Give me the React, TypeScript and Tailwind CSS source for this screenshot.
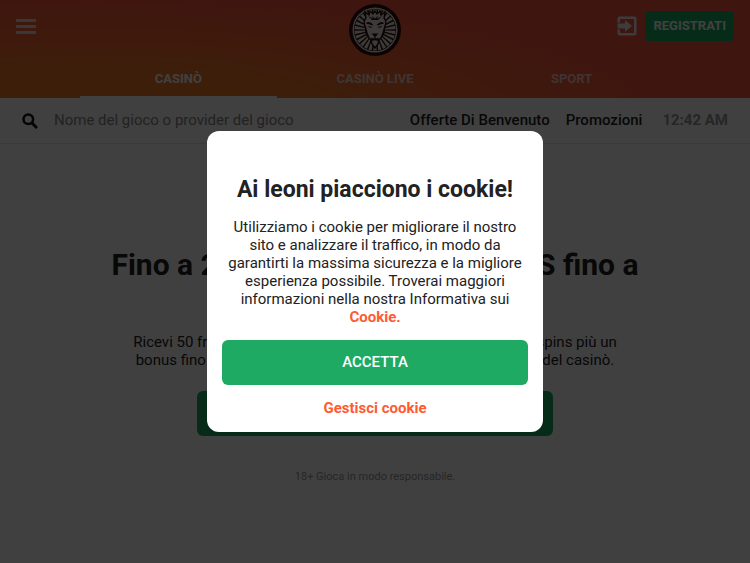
import { useState } from 'react'

const TABS = ['CASINÒ', 'CASINÒ LIVE', 'SPORT']

const RAYS = Array.from({ length: 26 }, (_, i) => (i * 360) / 26)

function LionLogo(): React.JSX.Element {
  return (
    <svg viewBox="0 0 52 52" className="size-[52px]" role="img" aria-label="LeoVegas">
      <circle cx="26" cy="26" r="26" fill="#2a0d08" />
      <circle cx="26" cy="26" r="21.8" fill="none" stroke="#f0ece8" strokeWidth="1.4" />
      {/* mane */}
      {RAYS.map((deg) => (
        <path key={deg} d="M25.4 16 L24.3 5.5 H27.7 L26.6 16 Z" fill="#f0ece8" transform={`rotate(${deg} 26 26)`} />
      ))}
      <path
        d="M17 14 L16 8 L20 11 L21 7 L24 10 L26 7 L28 10 L31 7 L32 11 L36 8 L35 14 Q38 17 36 22 L34 29 L32 34 L30 36 L29 40 L26 44 L23 40 L22 36 L20 34 L18 29 L16 22 Q14 17 17 14 Z"
        fill="#f0ece8"
        stroke="#2a0d08"
        strokeWidth="1.4"
      />
      {/* face */}
      <g fill="#2a0d08">
        <path d="M17.5 18.5 Q21 17 24.5 21 L23 21.5 Q20.5 19.5 17.5 20 Z" />
        <path d="M34.5 18.5 Q31 17 27.5 21 L29 21.5 Q31.5 19.5 34.5 20 Z" />
        <path d="M18.5 22 L23.5 23 Q21 25 18.5 22 Z M33.5 22 L28.5 23 Q31 25 33.5 22 Z" />
        <path d="M22.5 29.5 H29.5 L26.6 32.5 V34.5 L30.5 34 L29 37 Q26 35.5 23 37 L21.5 34 L25.4 34.5 V32.5 Z" />
        <path d="M19 12 L24.5 15 L22.5 11.5 L26 14.5 L29.5 11.5 L27.5 15 L33 12 L29 16 H23 Z" />
      </g>
    </svg>
  )
}

function Header(): React.JSX.Element {
  const [active, setActive] = useState(0)

  return (
    <header className="bg-[radial-gradient(ellipse_75%_120%_at_12%_120%,#f47c20_0%,#f4782a_45%,#f85c38_85%,#fa5a3c_100%)]">
      <div className="grid h-[62px] grid-cols-3 items-start px-4">
        <div className="mt-[11px] flex h-[30px] items-center">
          <button aria-label="Menu" className="flex h-[15px] w-5 flex-col justify-between">
            <span className="h-[3px] w-full bg-[#e0e0e0]" />
            <span className="h-[3px] w-full bg-[#e0e0e0]" />
            <span className="h-[3px] w-full bg-[#e0e0e0]" />
          </button>
        </div>
        <a href="#" className="mt-1 justify-self-center">
          <LionLogo />
        </a>
        <div className="mt-[11px] flex items-center gap-2 justify-self-end">
          <button aria-label="Accedi">
            <svg viewBox="0 0 20 20" className="size-5" fill="#f0f0f0">
              <path d="M3 0.5 H17 Q19.5 0.5 19.5 3 V17 Q19.5 19.5 17 19.5 H3 Q0.5 19.5 0.5 17 V13.5 H3 V17 H17 V3 H3 V6.5 H0.5 V3 Q0.5 0.5 3 0.5 Z" />
              <path d="M0.5 7.5 H8 V4 L15 10 L8 16 V12.5 H0.5 Z" />
            </svg>
          </button>
          <button className="h-[30px] rounded bg-[#1daa63] px-2 text-[13px] font-bold text-white">REGISTRATI</button>
        </div>
      </div>
      <nav className="grid grid-cols-3 px-20">
        {TABS.map((tab, i) => (
          <button
            key={tab}
            onClick={() => setActive(i)}
            className={
              i === active
                ? 'h-9 border-b-2 border-white text-[13px] font-bold text-white'
                : 'h-9 border-b-2 border-transparent text-[13px] font-bold text-white/70'
            }
          >
            {tab}
          </button>
        ))}
      </nav>
    </header>
  )
}

function SearchBar(): React.JSX.Element {
  return (
    <div className="flex h-[46px] items-center border-b border-[#e8e8e8] px-[22px]">
      <label htmlFor="search" className="shrink-0">
        <svg viewBox="0 0 16 16" className="size-4" fill="none" stroke="#111" aria-label="Cerca">
          <circle cx="6.3" cy="6.3" r="4.8" strokeWidth="2.5" />
          <path d="M10 10 L15 15" strokeWidth="3" />
        </svg>
      </label>
      <input
        id="search"
        placeholder="Nome del gioco o provider del gioco"
        className="ml-4 min-w-0 flex-1 bg-transparent text-[15px] text-black outline-none placeholder:text-[#888]"
      />
      <nav className="flex gap-4 text-[15px] font-medium text-[#222]">
        <a href="#offerte">Offerte Di Benvenuto</a>
        <a href="#promozioni">Promozioni</a>
      </nav>
      <time className="ml-5 text-[15px] font-bold text-[#999]">12:42 AM</time>
    </div>
  )
}

function Hero(): React.JSX.Element {
  return (
    <main className="flex flex-col items-center pt-[103px] text-center text-[#222]">
      <h1 className="min-h-[72px] max-w-[560px] text-3xl leading-9 font-bold">
        Fino a 200 Free Spins e il BONUS fino a
      </h1>
      <p className="mt-3.5 text-[15px] leading-[18px]">
        Ricevi 50 free spins gratis alla registrazione e fino a 200 free spins più un
        <br />
        bonus fino a 1.000€ da utilizzare subito su tutti i giochi e slot del casinò.
      </p>
      <button aria-label="Gioca ora" className="mt-[22px] h-[45px] w-[356px] rounded-md bg-[#1daa63]" />
      <p className="mt-8 text-[11px] leading-[18px] text-[#999]">18+ Gioca in modo responsabile.</p>
    </main>
  )
}

function CookieDialog(): React.JSX.Element {
  return (
    <div className="fixed inset-0 z-10 flex items-center justify-center bg-black/75">
      <div
        role="dialog"
        aria-modal="true"
        aria-labelledby="cookie-title"
        className="flex w-[336px] flex-col rounded-xl bg-white px-[15px] pt-[45px] pb-[15px] text-center text-[#222]"
      >
        <h2 id="cookie-title" className="text-[23px] leading-7 font-bold">
          Ai leoni piacciono i cookie!
        </h2>
        <p className="my-3.5 text-[15px] leading-[18px]">
          Utilizziamo i cookie per migliorare il nostro sito e analizzare il traffico, in modo da garantirti la massima
          sicurezza e la migliore esperienza possibile. Troverai maggiori informazioni nella nostra Informativa sui{' '}
          <a href="#cookie" className="font-bold text-[#ff5a32]">
            Cookie.
          </a>
        </p>
        <button className="h-[45px] rounded-md bg-[#1faa63] text-[15px] font-medium text-white">ACCETTA</button>
        <button className="mt-3.5 text-[15px] leading-[18px] font-bold text-[#ff5a32]">Gestisci cookie</button>
      </div>
    </div>
  )
}

export default function App(): React.JSX.Element {
  return (
    <div className="min-h-screen bg-white font-['Roboto',sans-serif]">
      <Header />
      <SearchBar />
      <Hero />
      <CookieDialog />
    </div>
  )
}
